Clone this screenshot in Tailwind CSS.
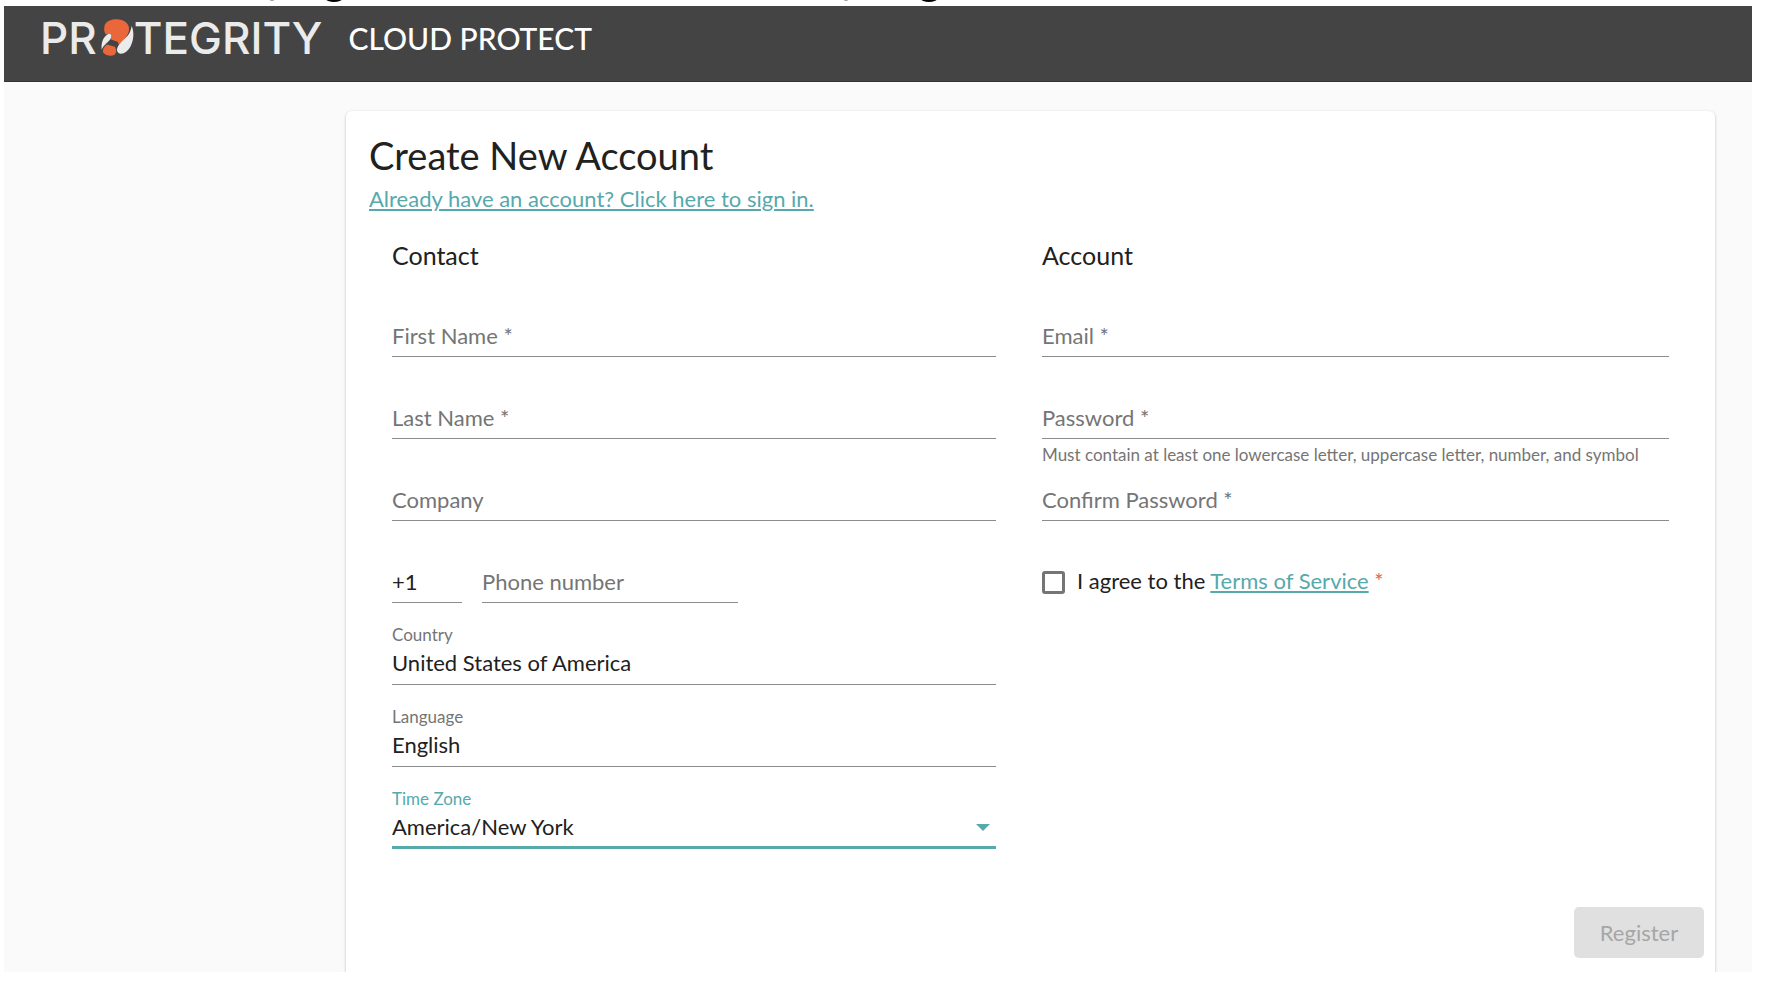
<!DOCTYPE html>
<html lang="en">
<head>
<meta charset="utf-8">
<meta name="viewport" content="width=device-width, initial-scale=1">
<title>Protegrity Cloud Protect – Create New Account</title>
<script src="https://cdn.jsdelivr.net/npm/@tailwindcss/browser@4"></script>
</head>
<body class="bg-white pl-1 pr-7 pb-3.5 font-['Lato',sans-serif] text-[22px] leading-7 text-[#212121]">

<!-- tails of the text line above the page frame -->
<svg class="block h-1.5 w-[1000px]" viewBox="4 0 1000 6" aria-hidden="true">
  <ellipse cx="272" cy="0" rx="2" ry="1" fill="#999"/>
  <ellipse cx="334" cy="-1" rx="8" ry="3" fill="#000"/>
  <ellipse cx="846" cy="0" rx="2" ry="1" fill="#999"/>
  <ellipse cx="929" cy="-1" rx="8" ry="3" fill="#000"/>
</svg>

<header class="flex h-[76px] items-start border-b border-[#333] bg-[#444] pt-[11px] pl-9">
  <div class="flex items-start font-['Inter',sans-serif] text-[44px] leading-[42px] font-medium text-[#ebebeb]">
    <span>PR</span>
    <svg class="mt-0.5 ml-1 h-[37px] w-[33px]" viewBox="64 56 98 112" role="img" aria-label="O">
      <path fill="#e9673a" d="M73 82 C74 65 90 57 110 57 C134 57 149 70 148 88 C147 104 132 120 119 136 L113 125 L93 118 L96 108 C92 99 85 99 78 103 C73 97 72 90 73 82Z"/>
      <path fill="#ebebeb" d="M156 77 C164 96 162 120 153 138 C145 154 133 162 122 161 C111 159 109 148 114 140 C121 126 139 114 147 102 C152 94 154 86 156 77Z"/>
      <path fill="#ebebeb" d="M65 148 C63 125 72 108 84 102 C92 98 98 106 93 114 C86 126 73 132 65 148Z"/>
      <path fill="#e9673a" d="M81 133 L105 140 C110 149 111 158 104 164 C95 170 78 167 70 158 C66 148 73 141 81 133Z"/>
    </svg>
    <span>TEGRITY</span>
  </div>
  <div class="mt-[3px] ml-[26px] text-[30px] leading-9 font-medium text-white">CLOUD PROTECT</div>
</header>

<main class="flex bg-[#fafafa] pt-[29px] pr-[37px] pl-[342px]">
  <form class="min-w-0 flex-1 rounded-t-md bg-white pt-[22px] pb-3.5 shadow-[0_1px_3px_rgba(0,0,0,0.25)] [clip-path:inset(-4px_-4px_0_-4px)]">
    <div class="px-[23px]">
      <h1 class="text-[38px] leading-[44px]">Create New Account</h1>
      <a href="#" class="mt-2 block w-fit text-[#56a9ac] underline underline-offset-2">Already have an account? Click here to sign in.</a>
    </div>

    <div class="mt-[26px] grid grid-cols-[604fr_627fr] gap-x-[46px] pr-[46px] pl-[46px]">
      <section>
        <h2 class="mb-1 text-[25px] leading-8">Contact</h2>
        <div class="grid h-[82px] content-end">
          <label for="first" class="pointer-events-none col-start-1 row-start-1 text-[#757575]">First Name *</label>
          <input id="first" type="text" class="col-start-1 row-start-1 w-full border-b border-[#8c8c8c] pb-1.5 outline-none">
        </div>
        <div class="grid h-[82px] content-end">
          <label for="last" class="pointer-events-none col-start-1 row-start-1 text-[#757575]">Last Name *</label>
          <input id="last" type="text" class="col-start-1 row-start-1 w-full border-b border-[#8c8c8c] pb-1.5 outline-none">
        </div>
        <div class="grid h-[82px] content-end">
          <label for="company" class="pointer-events-none col-start-1 row-start-1 text-[#757575]">Company</label>
          <input id="company" type="text" class="col-start-1 row-start-1 w-full border-b border-[#8c8c8c] pb-1.5 outline-none">
        </div>
        <div class="flex h-[82px] items-end gap-5">
          <input aria-label="Country code" type="text" value="+1" class="w-[70px] border-b border-[#8c8c8c] pb-1.5 outline-none">
          <div class="grid w-64">
            <label for="phone" class="pointer-events-none col-start-1 row-start-1 text-[#757575]">Phone number</label>
            <input id="phone" type="tel" class="col-start-1 row-start-1 w-full border-b border-[#8c8c8c] pb-1.5 outline-none">
          </div>
        </div>
        <div class="flex h-[82px] flex-col justify-end">
          <label for="country" class="mb-1 text-[17px] leading-5 text-[#757575]">Country</label>
          <input id="country" type="text" value="United States of America" class="w-full border-b border-[#8c8c8c] pb-[7px] outline-none">
        </div>
        <div class="flex h-[82px] flex-col justify-end">
          <label for="language" class="mb-1 text-[17px] leading-5 text-[#757575]">Language</label>
          <input id="language" type="text" value="English" class="w-full border-b border-[#8c8c8c] pb-[7px] outline-none">
        </div>
        <div class="flex h-[82px] flex-col justify-end">
          <label for="zone" class="mb-1 text-[17px] leading-5 text-[#56a9ac]">Time Zone</label>
          <div class="grid border-b-3 border-[#56a9ac]">
            <select id="zone" class="col-start-1 row-start-1 w-full appearance-none pb-[5px] outline-none"><option>America/New York</option></select>
            <svg class="pointer-events-none col-start-1 row-start-1 mt-[11px] mr-1.5 h-[7px] w-3.5 self-start justify-self-end" viewBox="0 0 14 7" aria-hidden="true"><path d="M0 0H14L7 7Z" fill="#56a9ac"/></svg>
          </div>
        </div>
      </section>

      <section>
        <h2 class="mb-1 text-[25px] leading-8">Account</h2>
        <div class="grid h-[82px] content-end">
          <label for="email" class="pointer-events-none col-start-1 row-start-1 text-[#757575]">Email *</label>
          <input id="email" type="email" class="col-start-1 row-start-1 w-full border-b border-[#8c8c8c] pb-1.5 outline-none">
        </div>
        <div class="grid h-[82px] content-end">
          <label for="password" class="pointer-events-none col-start-1 row-start-1 text-[#757575]">Password *</label>
          <input id="password" type="password" aria-describedby="hint" class="col-start-1 row-start-1 w-full border-b border-[#8c8c8c] pb-1.5 outline-none">
        </div>
        <p id="hint" class="h-7 pt-1 text-[17px] leading-6 whitespace-nowrap text-[#757575]">Must contain at least one lowercase letter, uppercase letter, number, and symbol</p>
        <div class="grid h-[54px] content-end">
          <label for="confirm" class="pointer-events-none col-start-1 row-start-1 text-[#757575]">Confirm Password *</label>
          <input id="confirm" type="password" class="col-start-1 row-start-1 w-full border-b border-[#8c8c8c] pb-1.5 outline-none">
        </div>
        <div class="mt-[46px] flex items-start gap-3">
          <input id="agree" type="checkbox" class="mt-1 size-[23px] shrink-0 appearance-none rounded-[3px] border-3 border-[#757575] checked:bg-[#56a9ac]">
          <label for="agree">I agree to the <a href="#" class="text-[#56a9ac] underline underline-offset-2">Terms of Service</a> <span class="text-[#e9673a]">*</span></label>
        </div>
      </section>
    </div>

    <div class="mt-[58px] flex justify-end pr-[11px]">
      <button type="submit" disabled class="h-[51px] w-[130px] rounded-[5px] bg-[#e0e0e0] text-[#a6a6a6]">Register</button>
    </div>
  </form>
</main>
</body>
</html>
